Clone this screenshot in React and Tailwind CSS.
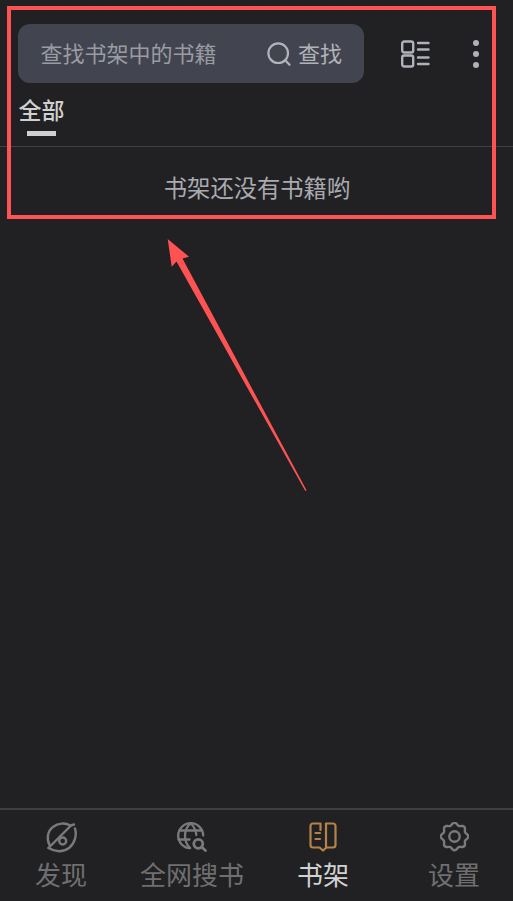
const gear = (() => {
  const pts = [];
  for (let i = 0; i < 96; i++) {
    const t = (i / 96) * Math.PI * 2;
    const r = 12.6 + 1.2 * Math.cos(8 * t);
    pts.push(`${(14.5 + r * Math.sin(t)).toFixed(2)} ${(14.5 - r * Math.cos(t)).toFixed(2)}`);
  }
  return `M${pts.join("L")}Z`;
})();

export default function App() {
  const cjk = { fontFamily: '"Noto Sans CJK SC", "Noto Sans", sans-serif' };
  return (
    <div className="relative flex h-[901px] w-[513px] flex-col overflow-hidden bg-[#212123]" style={cjk}>
      <div className="flex items-center pl-[18px] pt-[24px]">
        <div className="flex h-[59px] w-[346px] items-center justify-between rounded-[12px] bg-[#424450] pl-[22.500px] pr-[22px]">
          <span className="pb-[4px] text-[22px] leading-none text-[#9a9ca3]">查找书架中的书籍</span>
          <span className="flex items-center gap-[7px]">
            <svg width="24" height="24" viewBox="0 0 24 24" fill="none" stroke="#b0b4bb" strokeWidth="2.2" strokeLinecap="round">
              <circle cx="11.2" cy="11.2" r="9.8" />
              <path d="M18.5 18.5 22.5 22.8" />
            </svg>
            <span className="pb-[4px] text-[22px] leading-none text-[#b0b2b8]">查找</span>
          </span>
        </div>
        <svg className="ml-[36px]" width="30" height="28" viewBox="0 0 30 28" fill="none" stroke="#aeb2b9" strokeWidth="2.4" strokeLinecap="round">
          <rect x="2.2" y="1.5" width="11" height="11" rx="2" />
          <rect x="2.2" y="15.5" width="11" height="11" rx="2" />
          <path d="M18 3h10.5M18 9.5h10.5M18 17.5h10.5M18 24h10.5" />
        </svg>
        <div className="ml-[43px] flex flex-col gap-[5px]">
          <span className="h-[6px] w-[6px] rounded-full bg-[#aeb2b9]" />
          <span className="h-[6px] w-[6px] rounded-full bg-[#aeb2b9]" />
          <span className="h-[6px] w-[6px] rounded-full bg-[#aeb2b9]" />
        </div>
      </div>

      <div className="flex h-[64px] flex-col border-b border-[#414143] pl-[18.500px]">
        <span className="mt-[10px] text-[23px] font-medium leading-[32px] text-[#d0d0d0]">全部</span>
        <span className="ml-[8.500px] mt-[6px] h-[5px] w-[29px] bg-[#cfcfcf]" />
      </div>

      <div className="pl-[1px] pt-[24px] text-center text-[23.300px] leading-[32px] text-[#a9abb1]">书架还没有书籍哟</div>

      <nav className="-ml-[4.500px] mt-auto grid h-[93px] w-[524px] grid-cols-4 border-t-2 border-[#3f3f41] pt-[12px]">
        <div className="flex flex-col items-center text-[#6f6f71]">
          <svg width="32" height="32" viewBox="0 0 32 32" fill="none" stroke="#7a7a7c" strokeWidth="2.4" strokeLinecap="round" strokeLinejoin="round">
            <path d="M5 24C1 17 2.500 9 8 5 13 1 20 .5 25.500 3.500L29 2.500" />
            <path d="M3.500 26 25.500 4" />
            <path d="M30 6.500C32 13 30 21 24 26 18 30.500 10 30 3.500 26" />
            <circle cx="17.700" cy="19" r="3.500" />
          </svg>
          <span className="mt-[2px] text-[26px] leading-[36px]">发现</span>
        </div>
        <div className="flex flex-col items-center text-[#6f6f71]">
          <svg width="32" height="32" viewBox="0 0 32 32" fill="none" stroke="#7a7a7c" strokeWidth="2.300" strokeLinecap="round">
            <path d="M27.200 13.500A12.500 12.500 0 1 0 14 26.200" />
            <path d="M14.700 1.200C10.500 5 9 9.500 9 13.700 9 18 10.500 22.500 14 26" />
            <path d="M14.700 1.200C18 4.500 20 8.500 20.300 13" />
            <path d="M3.500 8.500h22.500M2.500 17.500h11" />
            <circle cx="22.300" cy="21.800" r="4.500" strokeWidth="2.800" />
            <path d="M25.800 25.300 29.500 28.500" strokeWidth="2.800" />
          </svg>
          <span className="mt-[2px] text-[26px] leading-[36px]">全网搜书</span>
        </div>
        <div className="flex flex-col items-center text-[#d2d2d2]">
          <svg width="28" height="32" viewBox="0 0 28 32" fill="none" stroke="#b5834a" strokeWidth="2.200" strokeLinecap="round" strokeLinejoin="round">
            <path d="M10 1.500H4C2.500 1.500 1.500 2.500 1.500 4v19c0 1.500 1 2.500 2.500 2.500h6.500L14 28.500l3.500-3H24c1.500 0 2.500-1 2.500-2.500V4c0-1.500-1-2.500-2.500-2.500h-6" />
            <path d="M11.500 1.500V8M17 1.500v24" />
            <path d="M6.500 11h4.500M6.500 17h4.500" />
          </svg>
          <span className="mt-[2px] text-[26px] leading-[36px]">书架</span>
        </div>
        <div className="flex flex-col items-center text-[#6f6f71]">
          <svg width="29" height="32" viewBox="0 0 29 32" fill="none" stroke="#7a7a7c" strokeWidth="2.400" strokeLinejoin="round">
            <path d={gear} />
            <circle cx="14.500" cy="14.500" r="5.200" />
          </svg>
          <span className="mt-[2px] text-[26px] leading-[36px]">设置</span>
        </div>
      </nav>

      <div className="pointer-events-none absolute left-[7px] top-[6px] h-[213px] w-[489px] border-4 border-[#ff5353]" />
      <svg className="pointer-events-none absolute left-0 top-0" width="513" height="901" viewBox="0 0 513 901">
        <polygon points="167.700,239 189,256.700 182.500,258.500 306.500,490.300 305.300,491 176.500,261.500 171.700,266.700" fill="#ff5353" />
      </svg>
    </div>
  );
}
